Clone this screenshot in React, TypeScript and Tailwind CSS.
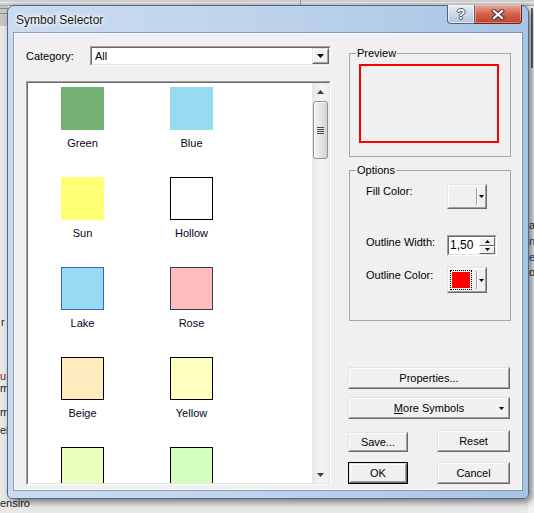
import React from "react";

function TriDown({ w = 7, h = 4, color = "#000" }: { w?: number; h?: number; color?: string }) {
  return (
    <svg width={w} height={h} viewBox={`0 0 ${w} ${h}`} className="block">
      <path d={`M0 0H${w}L${w / 2} ${h}Z`} fill={color} />
    </svg>
  );
}

function TriUp({ w = 7, h = 4, color = "#000" }: { w?: number; h?: number; color?: string }) {
  return (
    <svg width={w} height={h} viewBox={`0 0 ${w} ${h}`} className="block">
      <path d={`M0 ${h}H${w}L${w / 2} 0Z`} fill={color} />
    </svg>
  );
}

function Raised({
  className = "",
  innerClass = "",
  children,
}: {
  className?: string;
  innerClass?: string;
  children?: React.ReactNode;
}) {
  return (
    <div
      className={`border border-t-[#e3e3e3] border-l-[#e3e3e3] border-r-[#696969] border-b-[#696969] ${className}`}
    >
      <div
        className={`h-full w-full bg-[#f0f0f0] border border-t-white border-l-white border-r-[#a0a0a0] border-b-[#a0a0a0] ${innerClass}`}
      >
        {children}
      </div>
    </div>
  );
}

function Sunken({
  className = "",
  innerClass = "",
  children,
}: {
  className?: string;
  innerClass?: string;
  children?: React.ReactNode;
}) {
  return (
    <div
      className={`border border-t-[#a0a0a0] border-l-[#a0a0a0] border-r-white border-b-white ${className}`}
    >
      <div
        className={`h-full w-full border border-t-[#696969] border-l-[#696969] border-r-[#e3e3e3] border-b-[#e3e3e3] ${innerClass}`}
      >
        {children}
      </div>
    </div>
  );
}

const items = [
  { id: 1, name: "Green", cls: "bg-[#74b274]" },
  { id: 2, name: "Blue", cls: "bg-[#97dbf2]" },
  { id: 3, name: "Sun", cls: "bg-[#ffff73]" },
  { id: 4, name: "Hollow", cls: "bg-white border border-black" },
  { id: 5, name: "Lake", cls: "bg-[#97dbf2] border border-[#3c5fd0]" },
  { id: 6, name: "Rose", cls: "bg-[#ffbebe] border border-[#3a3a3a]" },
  { id: 7, name: "Beige", cls: "bg-[#ffebbe] border border-black" },
  { id: 8, name: "Yellow", cls: "bg-[#ffffbe] border border-black" },
  { id: 9, name: "", cls: "bg-[#e9ffbe] border border-black" },
  { id: 10, name: "", cls: "bg-[#d3ffbe] border border-black" },
];

function ColorButton({ children }: { children?: React.ReactNode }) {
  return (
    <Raised className="w-[40px] h-full" innerClass="flex">
      <div className="w-[27px] h-full flex items-center pl-[1px]">{children}</div>
      <div className="w-[1px] h-full py-[2px]">
        <div className="h-full bg-[#a0a0a0]" />
      </div>
      <div className="w-[1px] h-full py-[2px]">
        <div className="h-full bg-white" />
      </div>
      <div className="flex-1 flex items-center justify-center">
        <TriDown w={5} h={3} />
      </div>
    </Raised>
  );
}

export default function App() {
  return (
    <div className="relative w-[534px] h-[513px] overflow-hidden bg-[#e9e9e9] font-['Liberation_Sans',Arial,sans-serif] text-[11px] leading-[13px] text-black">
      {/* desktop behind the dialog */}
      <div className="absolute left-0 top-0 w-[534px] h-[6px] bg-[#cfcfcf] border-b border-[#a9a9a9]" />
      <div className="absolute left-0 top-[2px] w-[534px] h-[1px] bg-[#ececec]" />
      <div className="absolute left-[300px] top-0 w-[1px] h-[6px] bg-[#9a9a9a]" />
      <div className="absolute left-0 top-[6px] w-[8px] h-[20px] bg-[#c6c6c6]" />
      <div className="absolute left-0 top-[8px] w-[8px] h-[1px] bg-[#8c8c8c]" />
      <div className="absolute left-0 top-[13px] w-[8px] h-[1px] bg-[#8c8c8c]" />
      <div className="absolute left-[528px] top-[6px] w-[6px] h-[507px] bg-[#f4f4f4]" />
      <div className="absolute left-[531px] top-[8px] w-[2px] h-[60px] bg-[#6c6c6c]" />
      <span className="absolute left-[1px] top-[316px] text-[#222]">r</span>
      <span className="absolute left-0 top-[370px] text-[#8b1a1a]">u</span>
      <span className="absolute left-0 top-[382px] text-[#222]">m</span>
      <span className="absolute left-0 top-[406px] text-[#222]">m</span>
      <span className="absolute left-0 top-[424px] text-[#222]">el</span>
      <span className="absolute left-[529px] top-[219px] text-[#222]">a</span>
      <span className="absolute left-[529px] top-[235px] text-[#1a3c8b]">n</span>
      <span className="absolute left-[529px] top-[251px] text-[#1a3c8b]">e</span>
      <span className="absolute left-[529px] top-[266px] text-[#222]">o</span>
      <span className="absolute left-0 top-[497px] text-[#222]">ensiro</span>

      {/* dialog window */}
      <div className="absolute left-[7px] top-[5px] w-[522px] h-[494px] rounded-t-[7px] rounded-b-[5px] border border-[#4f6a8c] bg-linear-to-r from-[#cadcf0] via-[#bed3eb] to-[#a8c4e4] shadow-[3px_3px_7px_rgba(0,0,0,0.5)] px-[6px] flex flex-col">
        {/* title bar */}
        <div className="h-[27px] shrink-0 flex items-start">
          <div className="pt-[7px] pl-[2px] text-[12px] leading-[14px] text-[#151515] [text-shadow:0_0_8px_#fff,0_0_5px_#fff,0_0_3px_#fff]">
            Symbol Selector
          </div>
          <div className="ml-auto -mt-[1px] flex">
            <div className="w-[28px] h-[19px] rounded-bl-[4px] border border-t-0 border-[#4e6583] bg-linear-to-b from-[#e6edf5] via-[#cdd9e7] to-[#b3c5da] flex items-center justify-center shadow-[inset_0_0_0_1px_rgba(255,255,255,0.6)]">
              <span className="font-bold text-[14px] leading-[14px] text-white [text-shadow:1px_0_#4a5868,-1px_0_#4a5868,0_1px_#4a5868,0_-1px_#4a5868]">
                ?
              </span>
            </div>
            <div className="w-[47px] h-[19px] rounded-br-[4px] border border-t-0 border-l-0 border-[#6a2418] bg-linear-to-b from-[#eaa797] via-[#d4624c] to-[#c2402a] flex items-center justify-center shadow-[inset_0_0_0_1px_rgba(255,200,190,0.5)]">
              <svg width="14" height="11" viewBox="0 0 14 11">
                <path d="M3 2 L11 9 M11 2 L3 9" stroke="#3b3b3b" strokeWidth="4.2" strokeLinecap="square" />
                <path d="M3 2 L11 9 M11 2 L3 9" stroke="#ffffff" strokeWidth="2.2" strokeLinecap="square" />
              </svg>
            </div>
          </div>
        </div>

        {/* client area */}
        <div className="h-[457px] shrink-0 bg-[#f0f0f0] border border-[#f8fafc] shadow-[0_0_0_1px_rgba(60,90,130,0.45)] flex pl-[11px] pt-[12px]">
          {/* left column */}
          <div className="w-[305px] flex flex-col">
            <div className="h-[20px] flex items-center">
              <div className="w-[64px] text-black">Category:</div>
              <Sunken className="w-[241px] h-[20px]" innerClass="bg-white flex">
                <div className="flex-1 flex items-center pl-[3px]">All</div>
                <Raised className="w-[17px] h-full" innerClass="flex items-center justify-center">
                  <TriDown w={7} h={4} />
                </Raised>
              </Sunken>
            </div>

            <Sunken className="mt-[15px] w-[305px] h-[404px]" innerClass="flex">
              <div className="flex-1 bg-white overflow-hidden">
                <div className="grid grid-cols-[109px_109px]">
                  {items.map((it) => (
                    <div key={it.id} className="h-[90px] flex flex-col items-center pt-[4px]">
                      <div className={`w-[43px] h-[43px] ${it.cls}`} />
                      {it.name ? <div className="mt-[7px] text-[#050518]">{it.name}</div> : null}
                    </div>
                  ))}
                </div>
              </div>
              {/* scrollbar */}
              <div className="w-[17px] h-full flex flex-col bg-linear-to-r from-[#e6e6e6] via-[#f3f3f3] to-[#eeeeee]">
                <div className="h-[17px] flex items-center justify-center">
                  <TriUp w={7} h={4} color="#3d3d3d" />
                </div>
                <div className="flex-1 px-[1px] pt-[1px]">
                  <div className="h-[58px] rounded-[3px] border border-[#8f8f8f] bg-linear-to-r from-[#f3f3f3] via-[#e4e4e4] to-[#d3d3d3] shadow-[inset_1px_1px_0_#fff] flex flex-col items-center justify-center gap-[1px]">
                    <div className="w-[7px] h-[1px] bg-[#4a4a4a]" />
                    <div className="w-[7px] h-[1px] bg-[#4a4a4a]" />
                    <div className="w-[7px] h-[1px] bg-[#4a4a4a]" />
                    <div className="w-[7px] h-[1px] bg-[#4a4a4a]" />
                  </div>
                </div>
                <div className="h-[17px] flex items-center justify-center">
                  <TriDown w={7} h={4} color="#3d3d3d" />
                </div>
              </div>
            </Sunken>
          </div>

          {/* right column */}
          <div className="ml-[17px] w-[162px] flex flex-col">
            <fieldset className="ml-[1px] w-[162px] border border-[#a7a7a7]">
              <legend className="ml-[6px] px-[1px] leading-[14px] text-black">Preview</legend>
              <div className="mt-[4px] mb-[13px] ml-[9px] w-[140px] h-[79px] border-2 border-[#ff0000]" />
            </fieldset>

            <fieldset className="mt-[6px] ml-[1px] w-[162px] border border-[#a7a7a7]">
              <legend className="ml-[6px] px-[1px] leading-[14px] text-black">Options</legend>
              <div className="pl-[16px] pt-[7px] pb-[27px] flex flex-col">
                <div className="h-[25px] flex">
                  <div className="w-[81px] pt-[1px] text-black">Fill Color:</div>
                  <ColorButton />
                </div>
                <div className="mt-[26px] h-[21px] flex">
                  <div className="w-[81px] pt-[1px] text-black">Outline Width:</div>
                  <Sunken className="w-[50px] h-[21px]" innerClass="bg-white flex">
                    <div className="flex-1 flex items-center pl-[1px] text-[12px]">1,50</div>
                    <div className="w-[16px] h-full flex flex-col">
                      <div className="flex-1 border border-t-white border-l-white border-r-[#696969] border-b-[#696969] bg-[#f0f0f0] flex items-center justify-center">
                        <TriUp w={5} h={3} />
                      </div>
                      <div className="flex-1 border border-t-white border-l-white border-r-[#696969] border-b-[#696969] bg-[#f0f0f0] flex items-center justify-center">
                        <TriDown w={5} h={3} />
                      </div>
                    </div>
                  </Sunken>
                </div>
                <div className="mt-[11px] h-[26px] flex">
                  <div className="w-[81px] pt-[2px] text-black">Outline Color:</div>
                  <ColorButton>
                    <div className="border border-dotted border-black p-[1px]">
                      <div className="w-[18px] h-[16px] bg-[#ff0000]" />
                    </div>
                  </ColorButton>
                </div>
              </div>
            </fieldset>

            <Raised className="mt-[46px] w-[162px] h-[22px]" innerClass="flex items-center justify-center">
              Properties...
            </Raised>
            <Raised className="mt-[8px] w-[162px] h-[22px]" innerClass="relative flex items-center justify-center">
              <span>
                <span className="underline">M</span>ore Symbols
              </span>
              <span className="absolute right-[4px] top-[8px]">
                <TriDown w={5} h={3} />
              </span>
            </Raised>

            <div className="mt-[11px] h-[22px] flex items-start">
              <Raised className="mt-[2px] w-[60px] h-[20px]" innerClass="flex items-center justify-center">
                Save...
              </Raised>
              <Raised className="ml-auto w-[73px] h-[22px]" innerClass="flex items-center justify-center">
                Reset
              </Raised>
            </div>

            <div className="mt-[10px] h-[22px] flex">
              <div className="w-[60px] h-[22px] border border-black">
                <Raised className="w-full h-full" innerClass="flex items-center justify-center">
                  OK
                </Raised>
              </div>
              <Raised className="ml-auto w-[73px] h-[22px]" innerClass="flex items-center justify-center">
                Cancel
              </Raised>
            </div>
          </div>
        </div>
      </div>
    </div>
  );
}
